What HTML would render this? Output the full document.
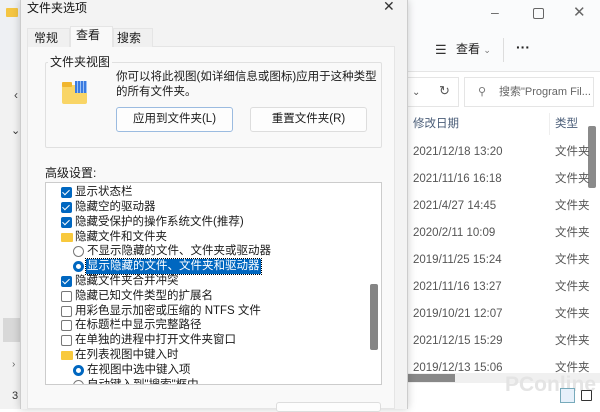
<!DOCTYPE html>
<html><head><meta charset="utf-8"><style>
*{margin:0;padding:0;box-sizing:border-box}
body{width:600px;height:409px;overflow:hidden;background:#fff;font-family:"Liberation Sans","Noto Sans CJK SC",sans-serif;font-size:11.5px;color:#1a1a1a;position:relative}
.a{position:absolute;white-space:nowrap;line-height:15px}
.cb{position:absolute;width:11px;height:11px;border-radius:2px;background:#0067c0}
.cb::after{content:"";position:absolute;left:3px;top:1px;width:3px;height:6px;border:solid #fff;border-width:0 1.5px 1.5px 0;transform:rotate(45deg)}
.ub{position:absolute;width:11px;height:11px;border-radius:2px;border:1px solid #777;background:#fff}
.rd{position:absolute;width:11px;height:11px;border-radius:50%;border:1px solid #777;background:#fff}
.rs{position:absolute;width:11px;height:11px;border-radius:50%;border:3px solid #0067c0;background:#fff}
.fd{position:absolute;width:12px;height:9px;background:#f8c93d;border-radius:1px}
.row{font-size:11.5px;color:#555}
</style></head><body>
<div class="a" style="left:0;top:0;width:22px;height:409px;background:#f2f2f2"></div>
<div class="a" style="left:0;top:0;width:22px;height:70px;background:#eef0f3"></div>
<div class="a" style="left:6px;top:8px;width:12px;height:9px;background:#f4c542;border-radius:1px"></div>
<div class="a" style="left:14px;top:88px;color:#444;font-size:12px">‹</div>
<div class="a" style="left:11px;top:124px;color:#333;font-size:11px">⌄</div>
<div class="a" style="left:3px;top:318px;width:18px;height:24px;background:#d8d8d8"></div>
<div class="a" style="left:12px;top:357px;color:#666;font-size:10px">›</div>
<div class="a" style="left:12px;top:389px;color:#333;font-size:11px">3</div>

<div class="a" style="left:407px;top:0;width:193px;height:409px;background:#fafbfc"></div>
<div class="a" style="left:407px;top:72px;width:193px;height:337px;background:#fff"></div>
<div class="a" style="left:491px;top:5px;font-size:14px;color:#666">–</div>
<div class="a" style="left:533px;top:8px;width:11px;height:11px;border:1px solid #666;border-radius:2px"></div>
<div class="a" style="left:573px;top:5px;font-size:15px;color:#666">✕</div>
<div class="a" style="left:435px;top:42px;font-size:13px;color:#333">☰</div>
<div class="a" style="left:456px;top:42px;font-size:12px;color:#222">查看 <span style="font-size:9px;color:#777">⌄</span></div>
<div class="a" style="left:503px;top:38px;width:1px;height:24px;background:#ddd"></div>
<div class="a" style="left:516px;top:40px;font-size:14px;font-weight:bold;color:#222">···</div>
<div class="a" style="left:407px;top:71px;width:193px;height:1px;background:#e5e5e5"></div>
<div class="a" style="left:407px;top:77px;width:52px;height:30px;border:1px solid #e5e5e5;border-left:none;background:#fff"></div>
<div class="a" style="left:412px;top:85px;font-size:10px;color:#555">⌄</div>
<div class="a" style="left:439px;top:83px;font-size:13px;color:#555">↻</div>
<div class="a" style="left:464px;top:77px;width:130px;height:30px;border:1px solid #e5e5e5;background:#fff"></div>
<div class="a" style="left:478px;top:85px;font-size:11px;color:#777">⚲</div>
<div class="a" style="left:499px;top:85px;font-size:11px;color:#666">搜索"Program Fil...</div>
<div class="a" style="left:413px;top:117px;font-size:11.5px;color:#4a5d78">修改日期</div>
<div class="a" style="left:549px;top:113px;width:1px;height:22px;background:#eee"></div>
<div class="a" style="left:555px;top:117px;font-size:11.5px;color:#4a5d78">类型</div>
<div class="a" style="left:588px;top:126px;width:8px;height:62px;background:#8a8a8a;border-radius:2px"></div>
<div class="a row" style="left:413px;top:145px">2021/12/18 13:20</div><div class="a row" style="left:555px;top:145px">文件夹</div>
<div class="a row" style="left:413px;top:172px">2021/11/16 16:18</div><div class="a row" style="left:555px;top:172px">文件夹</div>
<div class="a row" style="left:413px;top:199px">2021/4/27 14:45</div><div class="a row" style="left:555px;top:199px">文件夹</div>
<div class="a row" style="left:413px;top:226px">2020/2/11 10:09</div><div class="a row" style="left:555px;top:226px">文件夹</div>
<div class="a row" style="left:413px;top:253px">2019/11/25 15:24</div><div class="a row" style="left:555px;top:253px">文件夹</div>
<div class="a row" style="left:413px;top:280px">2021/11/16 13:27</div><div class="a row" style="left:555px;top:280px">文件夹</div>
<div class="a row" style="left:413px;top:307px">2019/10/21 12:07</div><div class="a row" style="left:555px;top:307px">文件夹</div>
<div class="a row" style="left:413px;top:334px">2021/12/15 15:29</div><div class="a row" style="left:555px;top:334px">文件夹</div>
<div class="a row" style="left:413px;top:361px">2019/12/13 15:06</div><div class="a row" style="left:555px;top:361px">文件夹</div>
<div class="a" style="left:407px;top:373px;width:193px;height:10px;background:#f0f0f0"></div>
<div class="a" style="left:407px;top:374px;width:48px;height:8px;background:#888"></div>
<div class="a" style="left:505px;top:374px;font-size:21px;line-height:22px;color:#e4e4e4;font-weight:bold">PConline</div>
<div class="a" style="left:560px;top:388px;width:15px;height:15px;border:1px solid #7ab;background:#e6f0fa"></div>
<div class="a" style="left:581px;top:390px;width:11px;height:11px;border:1.5px solid #333;border-radius:1px"></div>

<div class="a" style="left:20px;top:0;width:388px;height:409px;background:#f3f3f3;border-left:1px solid #ccc;border-right:1px solid #ccc;box-shadow:0 0 8px rgba(0,0,0,.2)"></div>
<div class="a" style="left:27px;top:1px;font-size:12px;color:#111">文件夹选项</div>
<div class="a" style="left:383px;top:-1px;font-size:14px;color:#333">✕</div>
<div class="a" style="left:27px;top:46px;width:368px;height:363px;background:#f9f9f9;border:1px solid #e5e5e5"></div>
<div class="a" style="left:27px;top:28px;width:43px;height:19px;background:#f0f0f0;border:1px solid #e5e5e5;border-bottom:none"></div>
<div class="a" style="left:34px;top:31px;font-size:12px">常规</div>
<div class="a" style="left:70px;top:26px;width:43px;height:21px;background:#f9f9f9;border:1px solid #e5e5e5;border-bottom:none"></div>
<div class="a" style="left:76px;top:28px;font-size:12px">查看</div>
<div class="a" style="left:113px;top:28px;width:40px;height:19px;background:#f0f0f0;border:1px solid #e5e5e5;border-bottom:none"></div>
<div class="a" style="left:117px;top:31px;font-size:12px">搜索</div>

<div class="a" style="left:45px;top:62px;width:337px;height:86px;border:1px solid #e0e0e0;border-radius:2px"></div>
<div class="a" style="left:48px;top:55px;font-size:12px;background:#f9f9f9;padding:0 2px">文件夹视图</div>
<div class="a" style="left:62px;top:85px;width:25px;height:19px;background:#f9d566;border-radius:2px"></div>
<div class="a" style="left:62px;top:82px;width:10px;height:5px;background:#f1b62e;border-radius:1px"></div>
<div class="a" style="left:75px;top:81px;width:12px;height:12px;background:repeating-linear-gradient(90deg,#3b7be0 0 2px,#9cc2f5 2px 3px)"></div>
<div class="a" style="left:116px;top:70px;font-size:11.5px;line-height:15px;white-space:normal;width:265px">你可以将此视图(如详细信息或图标)应用于这种类型的所有文件夹。</div>
<div class="a" style="left:116px;top:107px;width:117px;height:25px;background:#fdfdfd;border:1px solid #9bbbe0;border-radius:3px;text-align:center;line-height:23px;font-size:11.5px">应用到文件夹(L)</div>
<div class="a" style="left:250px;top:107px;width:117px;height:25px;background:#fdfdfd;border:1px solid #ddd;border-radius:3px;text-align:center;line-height:23px;font-size:11.5px">重置文件夹(R)</div>

<div class="a" style="left:45px;top:166px;font-size:12px">高级设置:</div>
<div class="a" style="left:45px;top:182px;width:337px;height:203px;background:#fff;border:1px solid #ccc;overflow:hidden">
 <div class="a" style="left:324px;top:101px;width:8px;height:66px;background:#858585;border-radius:2px"></div>
 <div class="cb" style="left:15px;top:4px"></div><div class="a" style="left:29px;top:2px">显示状态栏</div>
 <div class="cb" style="left:15px;top:19px"></div><div class="a" style="left:29px;top:17px">隐藏空的驱动器</div>
 <div class="cb" style="left:15px;top:34px"></div><div class="a" style="left:29px;top:32px">隐藏受保护的操作系统文件(推荐)</div>
 <div class="fd" style="left:15px;top:50px"></div><div class="a" style="left:29px;top:47px">隐藏文件和文件夹</div>
 <div class="rd" style="left:27px;top:63px"></div><div class="a" style="left:41px;top:61px">不显示隐藏的文件、文件夹或驱动器</div>
 <div class="rs" style="left:27px;top:78px"></div><div class="a" style="left:40px;top:76px;background:#0067c0;color:#fff;padding:0 1px;outline:1px dotted #000">显示隐藏的文件、文件夹和驱动器</div>
 <div class="cb" style="left:15px;top:93px"></div><div class="a" style="left:29px;top:91px">隐藏文件夹合并冲突</div>
 <div class="ub" style="left:15px;top:108px"></div><div class="a" style="left:29px;top:106px">隐藏已知文件类型的扩展名</div>
 <div class="ub" style="left:15px;top:123px"></div><div class="a" style="left:29px;top:121px">用彩色显示加密或压缩的 NTFS 文件</div>
 <div class="ub" style="left:15px;top:137px"></div><div class="a" style="left:29px;top:135px">在标题栏中显示完整路径</div>
 <div class="ub" style="left:15px;top:152px"></div><div class="a" style="left:29px;top:150px">在单独的进程中打开文件夹窗口</div>
 <div class="fd" style="left:15px;top:168px"></div><div class="a" style="left:29px;top:165px">在列表视图中键入时</div>
 <div class="rs" style="left:27px;top:182px"></div><div class="a" style="left:41px;top:180px">在视图中选中键入项</div>
 <div class="rd" style="left:27px;top:197px"></div><div class="a" style="left:41px;top:195px">自动键入到"搜索"框中</div>
</div>
<div class="a" style="left:276px;top:402px;width:105px;height:10px;background:#fdfdfd;border:1px solid #ddd;border-radius:3px"></div>
</body></html>
